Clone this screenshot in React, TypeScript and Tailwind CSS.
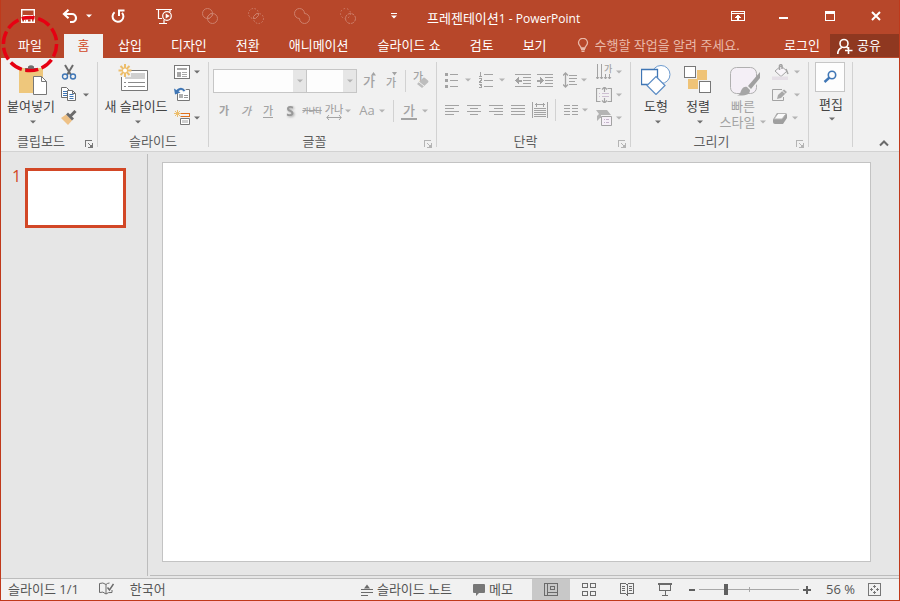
import React from "react";

type Kids = { children?: React.ReactNode };

function Svg({ w, h, crisp, className = "", children }: Kids & { w: number; h: number; crisp?: boolean; className?: string }) {
  return (
    <svg
      width={w}
      height={h}
      viewBox={`0 0 ${w} ${h}`}
      fill="none"
      aria-hidden="true"
      shapeRendering={crisp ? "crispEdges" : "auto"}
      className={`shrink-0 ${className}`}
    >
      {children}
    </svg>
  );
}

function Caret({ className = "text-[#6f6f6f]" }: { className?: string }) {
  return (
    <Svg w={6} h={4} className={className}>
      <path d="M0 0.5h6L3 3.5z" fill="currentColor" />
    </Svg>
  );
}

const dim = "text-[#b4b4b4]";

function Tool({ label, className = "", children }: Kids & { label: string; className?: string }) {
  return (
    <button type="button" aria-label={label} className={`flex h-[22px] w-[22px] shrink-0 items-center justify-center text-[#a3a3a3] ${className}`}>
      {children}
    </button>
  );
}

function More({ label, className = "" }: { label: string; className?: string }) {
  return (
    <button type="button" aria-label={label} className={`flex h-[22px] w-1.5 shrink-0 items-center ${className}`}>
      <Caret className={dim} />
    </button>
  );
}

function SideTool({ label, menu, muted, children }: Kids & { label: string; menu?: boolean; muted?: boolean }) {
  return (
    <button type="button" aria-label={label} className="flex h-[23px] items-center gap-1">
      {children}
      {menu && <Caret className={muted ? dim : "text-[#6f6f6f]"} />}
    </button>
  );
}

function Group({ title, launcher, muted, className, children }: Kids & { title: string; launcher?: boolean; muted?: boolean; className: string }) {
  return (
    <section aria-label={title} className={`flex shrink-0 ${className}`}>
      <div className="flex min-w-0 flex-1 flex-col">
        <div className="flex flex-1">{children}</div>
        <div className="flex h-[18px] items-start">
          <span className={`flex-1 text-center leading-4 text-[#5e5e5e] ${launcher ? "pr-1" : ""}`}>{title}</span>
          {launcher && (
            <button type="button" aria-label={`${title} 옵션`} className={`mr-1 pt-[7px] ${muted ? dim : "text-[#777]"}`}>
              <Svg w={8} h={8} crisp>
                <path d="M0.5 7V0.5H7M3 3l3 3M7.500 3v4.500H3" stroke="currentColor" />
                <path d="M7 4v3H4z" fill="currentColor" />
              </Svg>
            </button>
          )}
        </div>
      </div>
      <div className="my-1 w-px bg-[#d2d2d2]" />
    </section>
  );
}

function BigTool({ label, className, children }: Kids & { label: string; className: string }) {
  return (
    <button type="button" className={`flex shrink-0 flex-col items-center pt-1.5 text-[#444] ${className}`}>
      <span className="flex h-8 items-center">{children}</span>
      <span className="mt-0.5 whitespace-nowrap leading-4">{label}</span>
      <span className="flex h-4 items-center pl-[3px]">
        <Caret />
      </span>
    </button>
  );
}

function Combo({ label, className }: { label: string; className: string }) {
  return (
    <div className={`grid h-6 shrink-0 border border-[#c6c6c6] bg-[#fdfdfd] ${className}`}>
      <select aria-label={label} className="col-start-1 row-start-1 h-full w-full appearance-none bg-transparent outline-none" />
      <span className="pointer-events-none col-start-1 row-start-1 flex w-[13px] items-center justify-center justify-self-end bg-[#e6e6e6]">
        <Caret className={dim} />
      </span>
    </div>
  );
}

function QuickButton({ label, className = "w-[46px]", children }: Kids & { label: string; className?: string }) {
  return (
    <button type="button" aria-label={label} className={`flex h-8 shrink-0 items-center justify-center text-white ${className}`}>
      {children}
    </button>
  );
}

function TitleBar() {
  return (
    <div className="flex h-[34px] pl-1">
      <QuickButton label="저장">
        <Svg w={14} h={14}>
          <path d="M0.700 0.700h12.600v12.600h-12.600zM2 6.800h10M3.700 13V9.500h6.600V13" stroke="currentColor" strokeWidth="1.400" />
          <path d="M5 10.500h2V13H5z" fill="currentColor" />
        </Svg>
      </QuickButton>
      <QuickButton label="실행 취소" className="w-11 gap-2 pl-2">
        <Svg w={16} h={14}>
          <path d="M6.500 0.800L2 5l4.500 4.200M2 5h8a4 4 0 0 1 0 8H8" stroke="currentColor" strokeWidth="2.200" />
        </Svg>
        <Caret className="text-white" />
      </QuickButton>
      <QuickButton label="다시 실행">
        <Svg w={14} h={14}>
          <path d="M3.600 3.200A5.400 5.400 0 1 0 11 3.800" stroke="currentColor" strokeWidth="2" />
          <path d="M8 7V1.500H13.500" stroke="currentColor" strokeWidth="2" />
        </Svg>
      </QuickButton>
      <QuickButton label="슬라이드 쇼 시작">
        <Svg w={16} h={16}>
          <path d="M0 1.500h16M2.500 2v8.500H6M14 2v2M8 12v3M3 15.500h8" stroke="currentColor" strokeWidth="1.200" />
          <circle cx="11" cy="8" r="4.300" stroke="currentColor" strokeWidth="1.200" />
          <path d="M9.700 5.500v5l4-2.500z" fill="currentColor" />
        </Svg>
      </QuickButton>
      <QuickButton label="도형 결합" className="w-[46px] opacity-30">
        <Svg w={16} h={16}>
          <circle cx="5.500" cy="5.500" r="5" stroke="currentColor" />
          <circle cx="10.500" cy="10.500" r="5" stroke="currentColor" />
          <path d="M5.500 10.500v-2l3-3h2v2l-3 3z" stroke="currentColor" />
        </Svg>
      </QuickButton>
      <QuickButton label="도형 교차" className="w-[46px] opacity-30">
        <Svg w={16} h={16}>
          <circle cx="5.500" cy="5.500" r="5" stroke="currentColor" strokeDasharray="1.500 1.500" />
          <circle cx="10.500" cy="10.500" r="5" stroke="currentColor" strokeDasharray="1.500 1.500" />
          <path d="M5.500 10.500v-2l3-3h2v2l-3 3z" stroke="currentColor" />
        </Svg>
      </QuickButton>
      <QuickButton label="도형 병합" className="w-[46px] opacity-30">
        <Svg w={16} h={16}>
          <path d="M5.500 10.500A5 5 0 1 1 10.500 5.500A5 5 0 1 1 5.500 10.500z" stroke="currentColor" />
        </Svg>
      </QuickButton>
      <QuickButton label="도형 빼기" className="w-[46px] opacity-30">
        <Svg w={16} h={16}>
          <circle cx="5.500" cy="5.500" r="5" stroke="currentColor" strokeDasharray="1.500 2" />
          <circle cx="10.500" cy="10.500" r="5" stroke="currentColor" strokeDasharray="3 1" />
        </Svg>
      </QuickButton>
      <QuickButton label="빠른 실행 도구 모음 사용자 지정">
        <Svg w={6} h={6}>
          <path d="M0 0h6v1H0zM0 2.500h6L3 5.500z" fill="currentColor" />
        </Svg>
      </QuickButton>
      <h1 className="min-w-0 flex-1 truncate pl-2.5 pt-0.5 leading-8 text-white">
        프레젠테이션<span className="text-xs leading-8">1 - PowerPoint</span>
      </h1>
      <QuickButton label="리본 메뉴 표시 옵션">
        <Svg w={14} h={10} crisp>
          <path d="M0.500 0.500h13v9h-13zM0 2.500h14M7 4v5" stroke="currentColor" />
          <path d="M4 6h1V5h1V4h2v1h1v1h1v1H4zM6 6h2v3H6z" fill="currentColor" />
        </Svg>
      </QuickButton>
      <QuickButton label="최소화">
        <Svg w={10} h={6} crisp>
          <path d="M0 4h9v2H0z" fill="currentColor" />
        </Svg>
      </QuickButton>
      <QuickButton label="최대화">
        <Svg w={10} h={10} crisp>
          <path d="M0.500 0.500h9v9h-9z" stroke="currentColor" />
          <path d="M0 0h10v3H0z" fill="currentColor" />
        </Svg>
      </QuickButton>
      <QuickButton label="닫기">
        <Svg w={10} h={10}>
          <path d="M1 1l8 8M9 1l-8 8" stroke="currentColor" strokeWidth="2" />
        </Svg>
      </QuickButton>
    </div>
  );
}

const tabs = ["삽입", "디자인", "전환", "애니메이션", "슬라이드 쇼", "검토", "보기"];

function TabRow() {
  return (
    <div className="flex h-6 text-white">
      <nav className="flex shrink-0 gap-px">
        <div className="relative mr-1.5 flex w-14 shrink-0">
          <button type="button" className="w-full pb-0.5 pl-0.5 leading-[22px]">파일</button>
          <svg
            width="58"
            height="58"
            viewBox="0 0 58 58"
            fill="none"
            aria-hidden="true"
            className="pointer-events-none absolute -top-[19px] left-0 z-10"
          >
            <circle
              cx="29"
              cy="29"
              r="26.600"
              stroke="#e60012"
              strokeWidth="3.500"
              pathLength="100"
              strokeDasharray="7.800 2.200"
              transform="rotate(-108 29 29)"
            />
          </svg>
        </div>
        <button type="button" aria-current="page" className="w-[39px] bg-[#f1f1f1] pb-0.5 leading-[22px] text-[#d24726]">홈</button>
        {tabs.map((t) => (
          <button key={t} type="button" className="whitespace-nowrap px-3.5 pb-0.5 leading-[22px]">{t}</button>
        ))}
      </nav>
      <label className="ml-4 flex min-w-0 flex-1 items-center gap-1.5 pb-0.5 text-[#e9b9a9]">
        <Svg w={12} h={14}>
          <path d="M4 10C4 8 1.500 7.500 1.500 4.800a4.500 4.500 0 0 1 9 0C10.500 7.500 8 8 8 10zM4 11.500h4M4.500 13.300h3" stroke="currentColor" strokeWidth="1.300" />
        </Svg>
        <input
          type="text"
          aria-label="수행할 작업"
          placeholder="수행할 작업을 알려 주세요."
          className="h-[22px] w-full min-w-0 bg-transparent outline-none placeholder:text-[#e9b9a9] placeholder:opacity-100"
        />
      </label>
      <button type="button" className="shrink-0 px-2.5 pb-0.5 leading-[22px]">로그인</button>
      <button type="button" className="flex h-[23px] w-[69px] shrink-0 items-center gap-1 bg-[#8f3820] pl-[7px] leading-[22px]">
        <Svg w={16} h={16}>
          <circle cx="7" cy="5.500" r="4" stroke="currentColor" strokeWidth="1.600" />
          <path d="M0.800 16c0-3 1.500-5.500 4-6.500M9.500 9l1.500 1M11.500 9v7M8 12.500h7.500" stroke="currentColor" strokeWidth="1.600" />
        </Svg>
        <span className="pb-px">공유</span>
      </button>
    </div>
  );
}

function ClipboardGroup() {
  return (
    <Group title="클립보드" launcher className="w-[97px]">
      <BigTool label="붙여넣기" className="ml-1.5 w-12">
        <Svg w={28} h={30} className="ml-1">
          <path d="M0 3h24v11H14v14H0z" fill="#eec77c" />
          <path d="M6 6V3h3V1.500Q12 -1 15 1.500V3h3v3z" fill="#6f6f6f" />
          <path d="M14.500 11.500h8l5 5v13h-13z" fill="#fff" stroke="#777" />
          <path d="M22.500 11.500v5h5" stroke="#777" />
        </Svg>
      </BigTool>
      <div className="flex flex-col pl-1.5 pt-0.5">
        <SideTool label="잘라내기">
          <Svg w={16} h={16}>
            <path d="M4 1l6 10M12 1L6 11" stroke="#6b6b6b" strokeWidth="2" />
            <circle cx="4" cy="12.500" r="2.500" stroke="#3f76b5" strokeWidth="1.400" />
            <circle cx="12" cy="12.500" r="2.500" stroke="#3f76b5" strokeWidth="1.400" />
          </Svg>
        </SideTool>
        <SideTool label="복사" menu>
          <Svg w={18} h={15}>
            <path d="M0.500 0.500h5l3 3v7h-8z" fill="#fff" stroke="#6f6f6f" />
            <path d="M2 4.500h4M2 6.500h4M2 8.500h4" stroke="#3f76b5" />
            <path d="M6.500 3.500h5l3 3v7h-8z" fill="#fff" stroke="#6f6f6f" />
            <path d="M11.500 3.500v3h3" stroke="#6f6f6f" />
            <path d="M8.500 7.500h4M8.500 9.500h4M8.500 11.500h4" stroke="#3f76b5" />
          </Svg>
        </SideTool>
        <SideTool label="서식 복사">
          <Svg w={16} h={15}>
            <path d="M0 8l5-3.500 6 6L7 15z" fill="#eec186" />
            <path d="M6 3.500l6 6" stroke="#6b6b6b" strokeWidth="2.800" />
            <path d="M9.500 6l5-5" stroke="#6b6b6b" strokeWidth="3" />
          </Svg>
        </SideTool>
      </div>
    </Group>
  );
}

function SlidesGroup() {
  return (
    <Group title="슬라이드" className="w-[111px]">
      <BigTool label="새 슬라이드" className="ml-1.5 w-16">
        <Svg w={32} h={28} className="-ml-1 mb-1">
          <path d="M3.500 6.500h26v20h-26z" fill="#fff" stroke="#777" />
          <path d="M12 9h15v6H7v-3z" fill="#d0d0d0" />
          <path d="M6 18.500h2M10 18.500h17M6 22.500h2M10 22.500h17" stroke="#8a8a8a" />
          <path d="M1 1h12v12H1z" fill="#f1f1f1" />
          <path d="M7 0v13M0.500 6.500h13M2.500 2l9 9M11.500 2l-9 9" stroke="#edbe6b" strokeWidth="2" />
          <circle cx="7" cy="6.500" r="2" fill="#fff" />
        </Svg>
      </BigTool>
      <div className="flex flex-col pl-1.5 pt-0.5">
        <SideTool label="레이아웃" menu>
          <Svg w={16} h={14} crisp>
            <path d="M0.500 0.500h15v13h-15z" fill="#fff" stroke="#777" />
            <path d="M3 3h10v2H3zM3 7h4v5H3z" fill="#a8a8a8" />
            <path d="M8 7.500h5M8 9.500h5M8 11.500h5" stroke="#a8a8a8" />
          </Svg>
        </SideTool>
        <SideTool label="다시 설정">
          <Svg w={16} h={15}>
            <path d="M3.500 2.500h12v11h-12z" fill="#fff" stroke="#777" />
            <path d="M5 7h4v4H5z" fill="#b0b0b0" />
            <path d="M10 8.500h4M10 10.500h4" stroke="#999" />
            <path d="M2.500 5.500C4 1 8 0.500 11 4.500" stroke="#f1f1f1" strokeWidth="4" />
            <path d="M2.500 5.500C4 1.500 8 0.500 10.500 4" stroke="#3f76b5" strokeWidth="2" />
            <path d="M0 1.500l1 6 5.500-2z" fill="#3f76b5" />
          </Svg>
        </SideTool>
        <SideTool label="구역" menu>
          <Svg w={16} h={15}>
            <path d="M6.500 3.500H16M6.500 6.500H16M15.500 3v4" stroke="#e0701e" />
            <path d="M6.500 8.500h9v6h-9z" fill="#fff" stroke="#777" />
            <path d="M8 10h6v3H8z" fill="#d0d0d0" />
            <path d="M3.500 0v7M0 3.500h7M1 1l5 5M6 1L1 6" stroke="#edbe6b" />
          </Svg>
        </SideTool>
      </div>
    </Group>
  );
}

function FontGroup() {
  return (
    <Group title="글꼴" launcher muted className="w-[228px]">
      <div className="flex flex-col gap-[7px] pl-1 pt-[11px]">
        <div className="flex items-center">
          <Combo label="글꼴" className="w-[94px]" />
          <Combo label="글꼴 크기" className="-ml-px w-[51px]" />
          <Tool label="글꼴 크기 크게" className="ml-0.5">
            <span className="pt-0.5 font-medium">가</span>
            <Svg w={6} h={4} className="-ml-1 -mt-3.5">
              <path d="M0 3.500h5L2.500 0z" fill="currentColor" />
            </Svg>
          </Tool>
          <Tool label="글꼴 크기 작게">
            <span className="pt-1 text-[11px] font-medium">가</span>
            <Svg w={6} h={4} className="-ml-1 -mt-3.5">
              <path d="M0 0h5L2.500 3.500z" fill="currentColor" />
            </Svg>
          </Tool>
          <div className="ml-0.5 h-[22px] w-px bg-[#d2d2d2]" />
          <Tool label="모든 서식 지우기" className="ml-1">
            <span className="-mt-2 text-[11px] font-medium">가</span>
            <Svg w={12} h={12} className="-ml-1.5 mt-1">
              <path d="M0 7l6-6q1-1 2 0l3 2.500q1 1 0 2L5 11z" fill="#bdbdbd" />
              <path d="M2 5l5 4" stroke="#f1f1f1" />
            </Svg>
          </Tool>
        </div>
        <div className="flex items-center text-[11px]">
          <Tool label="굵게"><b>가</b></Tool>
          <Tool label="기울임꼴"><i className="font-medium">가</i></Tool>
          <Tool label="밑줄"><span className="border-b border-[#a3a3a3] font-medium leading-[13px]">가</span></Tool>
          <Tool label="텍스트 그림자">
            <b className="text-sm text-[#999] drop-shadow-[1px_1px_1px_#aaa]">S</b>
          </Tool>
          <Tool label="취소선"><s className="whitespace-nowrap text-[7px] font-bold">가나다</s></Tool>
          <Tool label="문자 간격">
            <span className="flex flex-col items-center leading-3">
              <span className="whitespace-nowrap text-[10px] font-medium">가나</span>
              <Svg w={16} h={5}>
                <path d="M1 2.500h14M3 0L0.800 2.500 3 5M13 0l2.200 2.500L13 5" stroke="currentColor" />
              </Svg>
            </span>
          </Tool>
          <More label="문자 간격 메뉴" />
          <Tool label="대/소문자 바꾸기" className="ml-[5px] text-[13px] font-medium">Aa</Tool>
          <More label="대/소문자 메뉴" className="ml-px" />
          <div className="ml-2 h-[22px] w-px bg-[#d2d2d2]" />
          <Tool label="글꼴 색" className="ml-1">
            <span className="border-b-2 border-[#a3a3a3] px-0.5 text-[13px] font-medium leading-4">가</span>
          </Tool>
          <More label="글꼴 색 메뉴" className="ml-0.5" />
        </div>
      </div>
    </Group>
  );
}

function ParagraphGroup() {
  return (
    <Group title="단락" launcher muted className="w-[194px]">
      <div className="flex flex-col gap-[7px] pl-1 pt-2.5">
        <div className="flex h-6 items-center">
          <Tool label="글머리 기호">
            <Svg w={14} h={16} crisp>
              <path d="M0 1h3v3H0zM0 7h3v3H0zM0 13h3v3H0zM5 2h8v1H5zM5 8h8v1H5zM5 14h8v1H5z" fill="currentColor" />
            </Svg>
          </Tool>
          <More label="글머리 기호 메뉴" className="ml-0.5" />
          <Tool label="번호 매기기" className="ml-1">
            <Svg w={14} h={16} crisp>
              <path d="M0.500 0.500h1v4M0 4.500h3M0 6.500h2.500v1.500L0.500 10h2.500M0 12h2.500v3.500H0M1 13.500h1" stroke="currentColor" />
              <path d="M5 2h9v1H5zM5 8h9v1H5zM5 14h9v1H5z" fill="currentColor" />
            </Svg>
          </Tool>
          <More label="번호 매기기 메뉴" className="ml-0.5" />
          <Tool label="목록 수준 줄임" className="ml-[7px]">
            <Svg w={16} h={14} crisp>
              <path d="M0 1.500h16M8 4.500h8M8 7.500h8M8 10.500h8M0 13.500h16" stroke="currentColor" />
              <path d="M0 7.500L4 4v2.500h3v2H4V11z" fill="currentColor" />
            </Svg>
          </Tool>
          <Tool label="목록 수준 늘림">
            <Svg w={16} h={14} crisp>
              <path d="M0 1.500h16M8 4.500h8M8 7.500h8M8 10.500h8M0 13.500h16" stroke="currentColor" />
              <path d="M7 7.500L3 4v2.500H0v2h3V11z" fill="currentColor" />
            </Svg>
          </Tool>
          <Tool label="줄 간격" className="ml-[3px]">
            <Svg w={14} h={16}>
              <path d="M2.500 1v14M0 3.500L2.500 1 5 3.500M0 12.500L2.500 15 5 12.500" stroke="currentColor" strokeWidth="1.300" />
              <path d="M6 3.500h8M6 6.500h8M6 9.500h6M6 12.500h8" stroke="currentColor" />
            </Svg>
          </Tool>
          <More label="줄 간격 메뉴" />
        </div>
        <div className="flex items-center">
          <Tool label="왼쪽 맞춤">
            <Svg w={14} h={11} crisp><path d="M0 .5h14M0 3.500h9M0 6.500h14M0 9.500h9" stroke="currentColor" /></Svg>
          </Tool>
          <Tool label="가운데 맞춤">
            <Svg w={14} h={11} crisp><path d="M0 .5h14M3 3.500h8M0 6.500h14M3 9.500h8" stroke="currentColor" /></Svg>
          </Tool>
          <Tool label="오른쪽 맞춤">
            <Svg w={14} h={11} crisp><path d="M0 .5h14M5 3.500h9M0 6.500h14M5 9.500h9" stroke="currentColor" /></Svg>
          </Tool>
          <Tool label="양쪽 맞춤">
            <Svg w={14} h={11} crisp><path d="M0 .5h14M0 3.500h14M0 6.500h14M0 9.500h14" stroke="currentColor" /></Svg>
          </Tool>
          <Tool label="균등 분할">
            <Svg w={16} h={16} crisp>
              <path d="M0.500 0v16M15.500 0v16M2 6.500h12M2 8.500h12M2 10.500h12M2 12.500h12M2 14.500h12M3 2.500h10M4.500 0.500v4M11.500 0.500v4" stroke="currentColor" />
            </Svg>
          </Tool>
          <div className="ml-1 h-[22px] w-px bg-[#d2d2d2]" />
          <Tool label="열" className="ml-1">
            <Svg w={14} h={11} crisp><path d="M0 .5h6M8 .5h6M0 3.500h6M8 3.500h6M0 6.500h6M8 6.500h6M0 9.500h6M8 9.500h6" stroke="currentColor" /></Svg>
          </Tool>
          <More label="열 메뉴" />
        </div>
      </div>
      <div className="flex flex-col pl-2 pt-0.5 text-[#a3a3a3]">
        <SideTool label="텍스트 방향" menu muted>
          <span className="flex w-4 items-start">
            <Svg w={8} h={16}>
              <path d="M1.500 0v15M5.500 0v15M0 13l1.500 2L3 13M4 13l1.500 2L7 13" stroke="currentColor" />
            </Svg>
            <span className="flex flex-col text-[9px] font-medium leading-[10px]">
              가
              <Svg w={8} h={6}>
                <path d="M1.500 0v5M5.500 0v5M0 3l1.500 2L3 3M4 3l1.500 2L7 3" stroke="currentColor" />
              </Svg>
            </span>
          </span>
        </SideTool>
        <SideTool label="텍스트 맞춤" menu muted>
          <Svg w={16} h={16}>
            <path d="M4.500 1.500h-4v13h4M11.500 1.500h4v13h-4M8.500 0v5M8.500 11v5M6 2.500L8.500 0 11 2.500M6 13.500L8.500 16 11 13.500" stroke="currentColor" strokeWidth="1.200" />
            <path d="M3 6.500h1M6 6.500h7M3 9.500h1M6 9.500h7" stroke="#cdc0d2" />
          </Svg>
        </SideTool>
        <SideTool label="SmartArt로 변환" menu muted>
          <Svg w={16} h={16}>
            <path d="M0 0h11l4 5H5v3H4l-3 3V6l2-2z" fill="#b4b4b4" />
            <path d="M5.500 6.500h10v9h-10z" fill="#f6f0f8" stroke="currentColor" />
            <path d="M8 9.500h1M10 9.500h3M8 12.500h1M10 12.500h3" stroke="#c4b4ca" />
          </Svg>
        </SideTool>
      </div>
    </Group>
  );
}

function DrawingGroup() {
  return (
    <Group title="그리기" launcher muted className="w-[178px]">
      <BigTool label="도형" className="ml-1 w-[42px]">
        <Svg w={30} h={30}>
          <circle cx="20" cy="9.500" r="9" fill="#fff" stroke="#6d9bcf" />
          <path d="M0.500 4.500h16v15h-16z" fill="#fff" stroke="#3f76b5" strokeWidth="1.300" />
          <path d="M15 11.500l9 9-9 9-9-9z" fill="#fff" stroke="#5b8cc4" strokeWidth="1.200" />
        </Svg>
      </BigTool>
      <BigTool label="정렬" className="w-[42px]">
        <Svg w={28} h={28} crisp>
          <path d="M13 4h10v10H13zM4 13h10v10H4z" fill="#efc377" />
          <path d="M0.500 0.500h11v11h-11zM15.500 15.500h11v11h-11z" fill="#fff" stroke="#777" />
        </Svg>
      </BigTool>
      <button type="button" className="flex w-12 flex-col items-center pt-2 text-[#a3a3a3]">
        <Svg w={30} h={30} className="ml-1">
          <rect x="0.500" y="1.500" width="26" height="26" rx="6" fill="#f4eff6" stroke="#b0b0b0" />
          <path d="M29.500 8L17 21l4 4 8-9z" fill="#f1f1f1" />
          <path d="M30 6v6l-9 11-3-3z" fill="#a0a0a0" />
          <path d="M17 21l3 3c0 4-3 6-13 5.500 4-1 3-4 5-6.500 1.500-2 3-2.500 5-2z" fill="#a6a6a6" />
        </Svg>
        <span className="mt-0.5 leading-4">빠른</span>
        <span className="flex items-center gap-[5px] whitespace-nowrap leading-4">
          스타일
          <Caret className={dim} />
        </span>
      </button>
      <div className="flex flex-col pl-[5px] pt-0.5">
        <SideTool label="도형 채우기" menu muted>
          <Svg w={18} h={16}>
            <path d="M3 7l6-5 6 5-6 5.500z" fill="#f8f5f9" stroke="#a3a3a3" />
            <path d="M7.500 6V1.500q1.500-2 2.500 0V5M14 5l2 5" stroke="#a3a3a3" strokeWidth="1.500" />
            <path d="M0 12.500h16v3.500H0z" fill="#e5dfe6" />
          </Svg>
        </SideTool>
        <SideTool label="도형 윤곽선" menu muted>
          <Svg w={18} h={14}>
            <path d="M10 1.500H0.500v11h11V9" stroke="#a3a3a3" />
            <path d="M5 11l1-4 6-5.500 3 2.500-6 6z" fill="#a8a8a8" />
            <path d="M10.500 3l2.500 2.500" stroke="#f1f1f1" />
          </Svg>
        </SideTool>
        <SideTool label="도형 효과" menu muted>
          <Svg w={16} h={14}>
            <path d="M1 8.500L5 2h8q2 0 2 2v3l-4 6H3q-2 0-2-2z" fill="#9f9f9f" />
            <path d="M2 8L6 2.500h7q1 0 0.500 1L10 8z" fill="#fafafa" stroke="#b5b5b5" />
          </Svg>
        </SideTool>
      </div>
    </Group>
  );
}

function Ribbon() {
  return (
    <div className="flex h-[94px] shrink-0 border-b border-[#d2d2d2] bg-[#f1f1f1]">
      <ClipboardGroup />
      <SlidesGroup />
      <FontGroup />
      <ParagraphGroup />
      <DrawingGroup />
      <button type="button" className="flex w-[43px] shrink-0 flex-col items-center pr-px pt-1 text-[#444]">
        <span className="flex h-[30px] w-[30px] items-center justify-center border border-[#c6c6c6] bg-[#fdfdfd]">
          <Svg w={14} h={14}>
            <circle cx="9" cy="5" r="3.700" stroke="#3f76b5" strokeWidth="1.600" />
            <path d="M6.500 7.500L1.500 12" stroke="#3f76b5" strokeWidth="2.400" />
          </Svg>
        </span>
        <span className="mt-1 pl-0.5 leading-4">편집</span>
        <span className="flex h-3.5 items-center pl-[3px]"><Caret /></span>
      </button>
      <div className="my-1 w-px bg-[#d2d2d2]" />
      <div className="flex flex-1 items-end justify-end">
        <button type="button" aria-label="리본 메뉴 축소" className="mb-1 mr-2.5">
          <Svg w={10} h={8}>
            <path d="M1 6.500l4-4 4 4" stroke="#6b6b6b" strokeWidth="2" />
          </Svg>
        </button>
      </div>
    </div>
  );
}

function Workspace() {
  return (
    <main className="flex min-h-0 flex-1 bg-[#e6e6e6]">
      <aside className="flex w-[146px] shrink-0 items-start gap-1 pl-[11px] pt-4 text-[#d24726]">
        <span className="w-[9px] text-base leading-4">1</span>
        <button type="button" aria-label="슬라이드 1" className="h-[60px] w-[101px] border-3 border-[#d24726] bg-white" />
      </aside>
      <div className="mb-0.5 mt-0.5 w-px bg-[#bcbcbc]" />
      <div className="mb-0.5 ml-0.5 flex flex-1 border-b border-[#bcbcbc] pb-[13px] pl-3 pr-7 pt-2.5">
        <div className="flex-1 border border-[#c3c3c3] bg-white" />
      </div>
    </main>
  );
}

function ViewButton({ label, active, children }: Kids & { label: string; active?: boolean }) {
  return (
    <button type="button" aria-label={label} aria-pressed={!!active} className={`flex w-[38px] shrink-0 items-center justify-center text-[#6b6b6b] ${active ? "bg-[#c8c8c8]" : ""}`}>
      {children}
    </button>
  );
}

function StatusBar() {
  return (
    <footer className="flex h-[22px] shrink-0 border-t border-[#bcbcbc] bg-[#f1f1f1] leading-[21px] text-[#555]">
      <span className="whitespace-nowrap pl-[7px]">슬라이드 1/1</span>
      <button type="button" aria-label="맞춤법 검사" className="ml-5 flex items-center pb-0.5">
        <Svg w={15} h={13}>
          <path d="M7 2.500Q4 0 0.500 1.500v9Q4 9 7 12zM7 2.500Q8.500 1 10.500 1M7 12q2-2 6-1.500V8" stroke="#6b6b6b" />
          <path d="M8.500 5.500l2 2.500 4-6" stroke="#6b6b6b" strokeWidth="1.500" />
        </Svg>
      </button>
      <button type="button" className="ml-4 whitespace-nowrap">한국어</button>
      <div className="flex-1" />
      <button type="button" className="flex items-center gap-1 whitespace-nowrap">
        <Svg w={12} h={12}>
          <path d="M3 4.500L6 0.500l3 4z" fill="#6b6b6b" />
          <path d="M0 5.500h12M0 8.500h12M0 11.500h7" stroke="#6b6b6b" />
        </Svg>
        슬라이드 노트
      </button>
      <button type="button" className="ml-[21px] mr-[19px] flex items-center gap-1 whitespace-nowrap">
        <Svg w={12} h={12}>
          <path d="M1 0h10q1 0 1 1v7q0 1-1 1H6l-3 3V9H1Q0 9 0 8V1q0-1 1-1z" fill="#777" />
        </Svg>
        메모
      </button>
      <ViewButton label="기본" active>
        <Svg w={14} h={13} crisp>
          <path d="M0.500 0.500h13v12h-13zM3.500 0v13M4 9.500h10M6.500 3.500h4v3h-4z" stroke="currentColor" />
        </Svg>
      </ViewButton>
      <ViewButton label="여러 슬라이드">
        <Svg w={14} h={13} crisp>
          <path d="M0.500 0.500h5v4h-5zM8.500 0.500h5v4h-5zM0.500 8.500h5v4h-5zM8.500 8.500h5v4h-5z" stroke="currentColor" />
        </Svg>
      </ViewButton>
      <ViewButton label="읽기용 보기">
        <Svg w={14} h={13} crisp>
          <path d="M0.500 0.500h5l1.500 1 1.500-1h5v10h-5L7 12 5.500 10.500h-5zM7 1v12M2 3.500h3M2 5.500h3M2 7.500h3M9 3.500h3M9 5.500h3M9 7.500h3" stroke="currentColor" />
        </Svg>
      </ViewButton>
      <ViewButton label="슬라이드 쇼">
        <Svg w={14} h={13} crisp>
          <path d="M0 1.500h14M1.500 2v5.500h11V2M7 8v4M4 12.500h6M0 0.500h14" stroke="currentColor" />
        </Svg>
      </ViewButton>
      <button type="button" aria-label="축소" className="ml-1 flex w-2 items-center">
        <Svg w={8} h={8} crisp><path d="M1 3h6v2H1z" fill="#5f5f5f" /></Svg>
      </button>
      <div className="mx-[3px] grid w-[100px] shrink-0 items-center">
        <span className="col-start-1 row-start-1 h-px bg-[#a8a8a8]" />
        <span className="col-start-1 row-start-1 h-[5px] w-px justify-self-center bg-[#a8a8a8]" />
        <input
          type="range"
          aria-label="확대/축소"
          min={0}
          max={100}
          defaultValue={26}
          className="col-start-1 row-start-1 h-3 w-full appearance-none bg-transparent [&::-webkit-slider-thumb]:h-[11px] [&::-webkit-slider-thumb]:w-1 [&::-webkit-slider-thumb]:appearance-none [&::-webkit-slider-thumb]:rounded-none [&::-webkit-slider-thumb]:bg-[#5f5f5f]"
        />
      </div>
      <button type="button" aria-label="확대" className="ml-px flex w-2 items-center">
        <Svg w={8} h={8} crisp><path d="M0 3h8v2H0zM3 0h2v8H3z" fill="#5f5f5f" /></Svg>
      </button>
      <button type="button" className="ml-[15px] w-8 whitespace-nowrap text-left">56 %</button>
      <button type="button" aria-label="현재 창 크기에 맞춤" className="ml-2.5 mr-[18px] flex items-center">
        <Svg w={13} h={13} crisp>
          <path d="M0.500 0.500h12v12h-12zM6.500 2v3M6.500 8v3M2 6.500h3M8 6.500h3M5 3.500h3M5 9.500h3M3.500 5v3M9.500 5v3" stroke="#777" />
        </Svg>
      </button>
    </footer>
  );
}

export default function App() {
  return (
    <div className="flex h-screen flex-col overflow-hidden border-x border-b border-[#c0391b] bg-[#b7472a] font-['Open_Sans','Noto_Sans_CJK_KR',sans-serif] text-[13px]">
      <header className="shrink-0">
        <TitleBar />
        <TabRow />
      </header>
      <Ribbon />
      <Workspace />
      <StatusBar />
    </div>
  );
}
